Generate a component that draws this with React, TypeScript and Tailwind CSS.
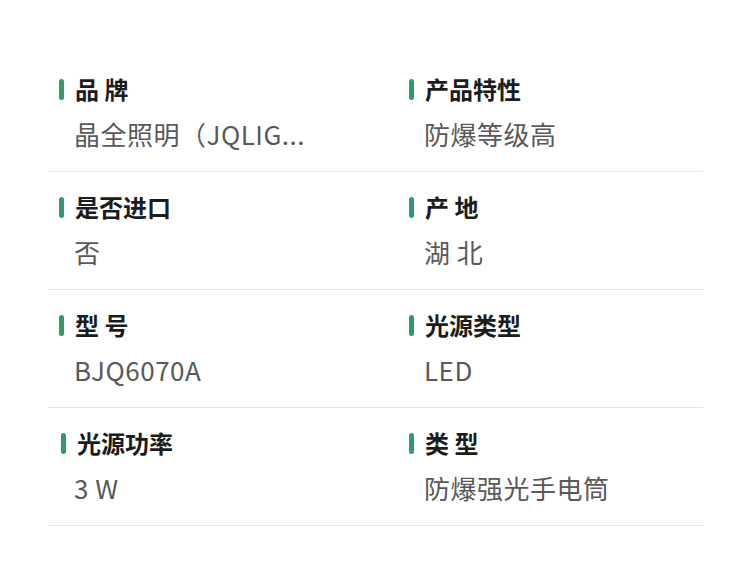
import React from "react";

type Item = { label: string; value: string; shift?: boolean };

const rows: [Item, Item][] = [
  [
    { label: "品 牌", value: "晶全照明（JQLIG..." },
    { label: "产品特性", value: "防爆等级高" },
  ],
  [
    { label: "是否进口", value: "否" },
    { label: "产 地", value: "湖 北" },
  ],
  [
    { label: "型 号", value: "BJQ6070A" },
    { label: "光源类型", value: "LED" },
  ],
  [
    { label: "光源功率", value: "3 W", shift: true },
    { label: "类 型", value: "防爆强光手电筒" },
  ],
];

function Cell({ item }: { item: Item }) {
  return (
    <div className="flex flex-col pt-[23px] pb-[22px]">
      <div className={`flex items-center h-[24px] ${item.shift ? "ml-[2px]" : ""}`}>
        <span className="ml-[11px] w-[5px] h-[21px] rounded-full bg-[#2f9a6c]" />
        <span className="ml-[11px] text-[24px] leading-[24px] font-bold text-[#1c1c1c]">
          {item.label}
        </span>
      </div>
      <div className="mt-[18px] pl-[26px] text-[26px] leading-[30px] tracking-[0.5px] text-[#595959] whitespace-nowrap">
        {item.value}
      </div>
    </div>
  );
}

export default function App() {
  return (
    <div
      className="w-[750px] h-[570px] bg-white pt-[54px] pl-[48px] pr-[47px]"
      style={{ fontFamily: '"Noto Sans CJK SC", "Noto Sans", sans-serif' }}
    >
      {rows.map((r, i) => (
        <div
          key={i}
          className="grid grid-cols-[350px_1fr] border-b border-[#e2eae7]"
        >
          <Cell item={r[0]} />
          <Cell item={r[1]} />
        </div>
      ))}
    </div>
  );
}
